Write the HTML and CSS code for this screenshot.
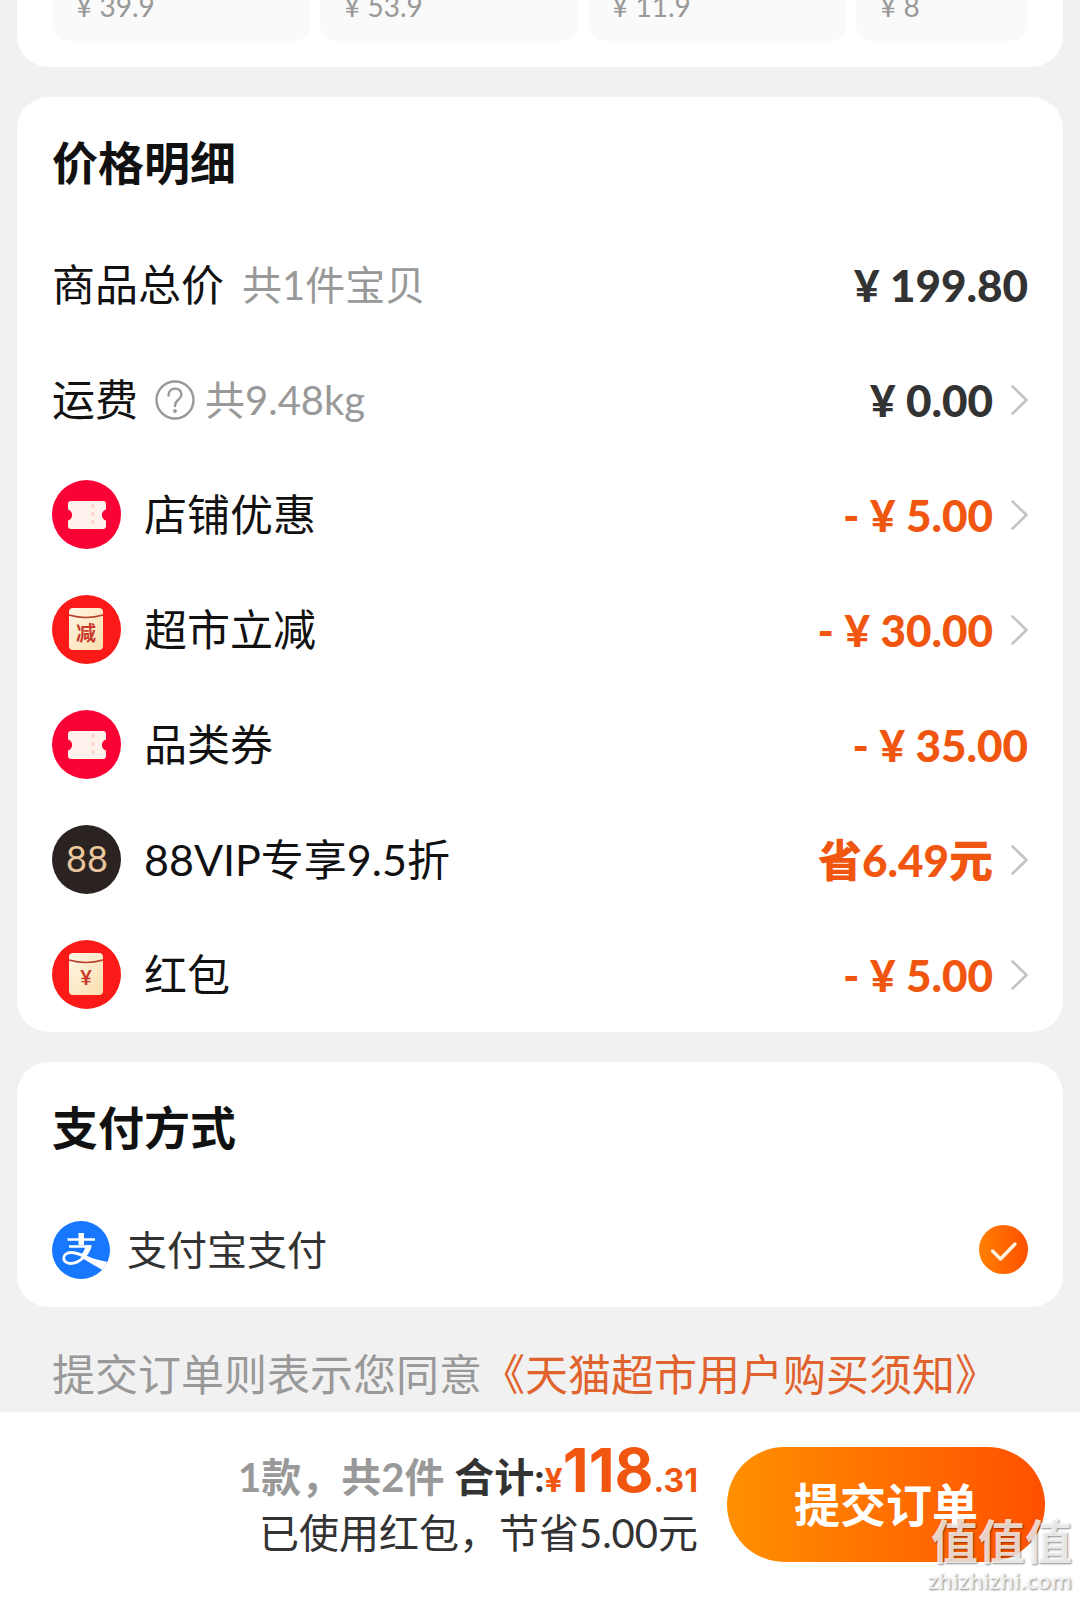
FILE: index.html
```html
<!DOCTYPE html>
<html lang="zh-CN">
<head>
<meta charset="utf-8">
<meta name="viewport" content="width=device-width, initial-scale=1">
<title>确认订单</title>
<link rel="stylesheet" href="styles.css">
</head>
<body>
<svg class="defs" aria-hidden="true">
  <defs>
    <linearGradient id="cream" x1="0" y1="0" x2="1" y2="1">
      <stop offset="0" stop-color="#fff6e6"/>
      <stop offset="1" stop-color="#fbdfae"/>
    </linearGradient>
    <linearGradient id="gold" x1="0" y1="0" x2="0" y2="1">
      <stop offset="0" stop-color="#f3d09a"/>
      <stop offset="1" stop-color="#e3bfa0"/>
    </linearGradient>
    <symbol id="ticket" viewBox="0 0 69 69">
      <circle cx="34.5" cy="34.5" r="34.5" fill="#fb0237"/>
      <path d="M19 21H51Q54 21 54 24V29.500C48.500 31 48.500 39 54 40.500V46Q54 49 51 49H19Q16 49 16 46V40.500C21.500 39 21.500 31 16 29.500V24Q16 21 19 21Z" fill="#fff1ec"/>
      <path d="M41 24V47" stroke="#fbd3cc" stroke-width="3" stroke-dasharray="4 4" fill="none"/>
    </symbol>
    <symbol id="envelope" viewBox="0 0 69 69">
      <circle cx="34.5" cy="34.5" r="34.5" fill="#fb1a17"/>
      <rect x="17" y="13" width="34" height="42" rx="4" fill="url(#cream)"/>
      <path d="M17 20Q34 25 51 20" stroke="#b8402c" stroke-width="1.500" fill="none"/>
    </symbol>
    <symbol id="chevron" viewBox="0 0 17 30">
      <path d="M1.500 1.500L15.500 15L1.500 28.500" fill="none" stroke="#c4c4c4" stroke-width="2.600" stroke-linecap="round" stroke-linejoin="round"/>
    </symbol>
  </defs>
</svg>

<main class="page">
  <section class="card goods">
    <div class="tile">¥ 39.9</div>
    <div class="tile">¥ 53.9</div>
    <div class="tile">¥ 11.9</div>
    <div class="tile">¥ 8</div>
  </section>

  <section class="card">
    <h2 class="title">价格明细</h2>
    <ul class="rows">
      <li class="row">
        <span class="label">商品总价</span>
        <span class="note note-spaced">共1件宝贝</span>
        <span class="amount">¥ 199.80</span>
      </li>
      <li class="row">
        <span class="label">运费</span>
        <button class="help" type="button" aria-label="运费说明">
          <svg viewBox="0 0 40 40" width="40" height="40">
            <circle cx="20" cy="20" r="18.500" fill="none" stroke="#999" stroke-width="2.400"/>
            <path d="M13.500 15.500C13.500 6.500 26.500 6.500 26.500 14.500C26.500 19.500 20 19.500 20 26" fill="none" stroke="#999" stroke-width="2.400" stroke-linecap="round"/>
            <circle cx="20" cy="31" r="1.900" fill="#999"/>
          </svg>
        </button>
        <span class="note">共9.48kg</span>
        <button class="amount" type="button">¥ 0.00<svg class="arrow"><use href="#chevron"/></svg></button>
      </li>
      <li class="row">
        <svg class="icon"><use href="#ticket"/></svg>
        <span class="label">店铺优惠</span>
        <button class="amount off" type="button">- ¥ 5.00<svg class="arrow"><use href="#chevron"/></svg></button>
      </li>
      <li class="row">
        <svg class="icon" viewBox="0 0 69 69"><use href="#envelope"/><text class="seal" x="34" y="46">减</text></svg>
        <span class="label">超市立减</span>
        <button class="amount off" type="button">- ¥ 30.00<svg class="arrow"><use href="#chevron"/></svg></button>
      </li>
      <li class="row">
        <svg class="icon"><use href="#ticket"/></svg>
        <span class="label">品类券</span>
        <span class="amount off">- ¥ 35.00</span>
      </li>
      <li class="row">
        <svg class="icon" viewBox="0 0 69 69"><circle cx="34.5" cy="34.5" r="34.5" fill="#2a2321"/><text class="vip" x="35" y="47" fill="url(#gold)">88</text></svg>
        <span class="label">88VIP专享9.5折</span>
        <button class="amount off" type="button">省6.49元<svg class="arrow"><use href="#chevron"/></svg></button>
      </li>
      <li class="row">
        <svg class="icon" viewBox="0 0 69 69"><use href="#envelope"/><text class="seal" x="34" y="45">¥</text></svg>
        <span class="label">红包</span>
        <button class="amount off" type="button">- ¥ 5.00<svg class="arrow"><use href="#chevron"/></svg></button>
      </li>
    </ul>
  </section>

  <section class="card">
    <h2 class="title">支付方式</h2>
    <label class="row pay">
      <svg class="pay-icon" viewBox="0 0 58 58">
        <defs><clipPath id="disc"><circle cx="29" cy="29" r="29"/></clipPath></defs>
        <g clip-path="url(#disc)">
          <rect width="58" height="58" fill="#1777ff"/>
          <path d="M26.500 12H32V24H26.500Z" fill="#fff"/>
          <path d="M15.500 18.500H43M17 25.500H38" stroke="#fff" stroke-width="2.600" fill="none"/>
          <path d="M38.500 24.500C36 33 28 42.500 18.500 42.500C9.500 42.500 9 31.500 19.500 31.500C27 31.500 34 36 44 41" stroke="#fff" stroke-width="2.800" fill="none"/>
          <path d="M39.500 24.200L34 24.200C33 28 31 31.500 29 34L32.500 35.500C36 32 38.500 28 39.500 24.200Z" fill="#fff"/>
          <path d="M30 33.500C38 36.500 47 39.500 58 41.500V46L52 50C45 46 37 41 29 36.500Z" fill="#fff"/>
        </g>
      </svg>
      <span class="pay-name">支付宝支付</span>
      <input class="check" type="radio" name="pay" checked>
    </label>
  </section>

  <p class="terms">提交订单则表示您同意<a class="terms-link" href="#terms">《天猫超市用户购买须知》</a></p>
</main>

<footer class="bar">
  <div class="summary">
    <div class="total"><span class="count">1款，共2件</span> 合计:<span class="sum"><span class="small">¥</span><span class="big">118</span><span class="small">.31</span></span></div>
    <div class="saved">已使用红包，节省5.00元</div>
  </div>
  <button class="submit" type="submit">提交订单</button>
  <div class="mark" aria-hidden="true">
    <div class="mark-name">值值值</div>
    <div class="mark-site">zhizhizhi.com</div>
  </div>
</footer>
</body>
</html>
```
FILE: styles.css
```css
* {
  box-sizing: border-box;
}

body {
  margin: 0;
  min-height: 100vh;
  display: flex;
  flex-direction: column;
  background: #f1f1f1;
  color: #111;
  font-family: Lato, "Noto Sans CJK SC", sans-serif;
  font-size: 43px;
  line-height: 56px;
}

button {
  margin: 0;
  padding: 0;
  border: 0;
  background: none;
  color: inherit;
  font: inherit;
  cursor: pointer;
}

.defs {
  position: absolute;
  width: 0;
  height: 0;
}

.page {
  flex: 1;
  display: flex;
  flex-direction: column;
  gap: 30px;
  padding: 0 17px;
}

.card {
  padding: 0 35px;
  border-radius: 32px;
  background: #fff;
}

.goods {
  display: grid;
  grid-template-columns: repeat(3, 259fr) 172fr;
  gap: 9px;
  padding-bottom: 26px;
  border-radius: 0 0 32px 32px;
}

.tile {
  display: flex;
  flex-direction: column;
  justify-content: flex-end;
  height: 41px;
  padding: 0 24px 19px;
  border-radius: 0 0 16px 16px;
  background: #fafafa;
  color: #999;
  font-size: 28px;
  line-height: 32px;
}

.title {
  margin: 0;
  padding: 2px 0 0;
  font-size: 46px;
  font-weight: 700;
  line-height: 128px;
}

.rows {
  margin: 0;
  padding: 0;
  list-style: none;
}

.row {
  display: flex;
  align-items: center;
  height: 115px;
}

.icon {
  width: 69px;
  height: 69px;
  margin-right: 23px;
}

.note {
  color: #999;
  font-size: 40px;
}

.note-spaced {
  margin-left: 18px;
}

.help {
  display: flex;
  margin: 0 10px 0 17px;
}

.amount {
  display: flex;
  align-items: center;
  gap: 18px;
  margin-left: auto;
  color: #333;
  font-size: 44px;
  font-weight: 900;
}

.off {
  color: #f0560f;
}

.arrow {
  width: 17px;
  height: 30px;
}

.seal {
  fill: #c8382b;
  font-size: 20px;
  font-weight: 700;
  text-anchor: middle;
}

.vip {
  font-size: 36px;
  text-anchor: middle;
}

.pay {
  color: #333;
  font-size: 40px;
}

.pay-icon {
  width: 58px;
  height: 58px;
  margin-right: 17px;
}

.check {
  appearance: none;
  width: 49px;
  height: 49px;
  margin: 0 0 0 auto;
  border-radius: 50%;
  background: #ff6a00;
}

.check:checked {
  background:
    url("data:image/svg+xml,%3Csvg xmlns='http://www.w3.org/2000/svg' viewBox='0 0 49 49'%3E%3Cpath d='M13.500 26L21.500 34L36 19' fill='none' stroke='%23fff3e0' stroke-width='3.400' stroke-linecap='round' stroke-linejoin='round'/%3E%3C/svg%3E"),
    linear-gradient(90deg, #ff8000, #ff5000);
}

.terms {
  margin: 0;
  padding: 10px 35px 9px;
  color: #999;
}

.terms-link {
  color: #e0622c;
  text-decoration: none;
}

.bar {
  position: sticky;
  bottom: 0;
  display: flex;
  align-items: center;
  justify-content: flex-end;
  gap: 29px;
  padding: 35px 35px 36px 17px;
  background: #fff;
}

.summary {
  color: #333;
  font-size: 40px;
  text-align: right;
}

.total {
  font-weight: 700;
}

.count {
  color: #999;
}

.sum {
  color: #f0560f;
  font-family: Inter, Lato, sans-serif;
  line-height: 40px;
}

.small {
  font-size: 32px;
}

.big {
  font-size: 60px;
}

.submit {
  width: 318px;
  height: 115px;
  border-radius: 58px;
  background: linear-gradient(90deg, #ff9000, #ff5000);
  color: #fff;
  font-size: 46px;
  font-weight: 700;
}

.mark {
  position: absolute;
  right: 8px;
  bottom: 4px;
  color: rgba(255, 255, 255, 0.8);
  text-align: right;
  text-shadow: 1px 1px 2px rgba(0, 0, 0, 0.45);
}

.mark-name {
  font-size: 47px;
  font-weight: 700;
  line-height: 50px;
}

.mark-site {
  font-family: "Noto Sans", sans-serif;
  font-size: 22px;
  font-weight: 600;
  line-height: 28px;
}
```
